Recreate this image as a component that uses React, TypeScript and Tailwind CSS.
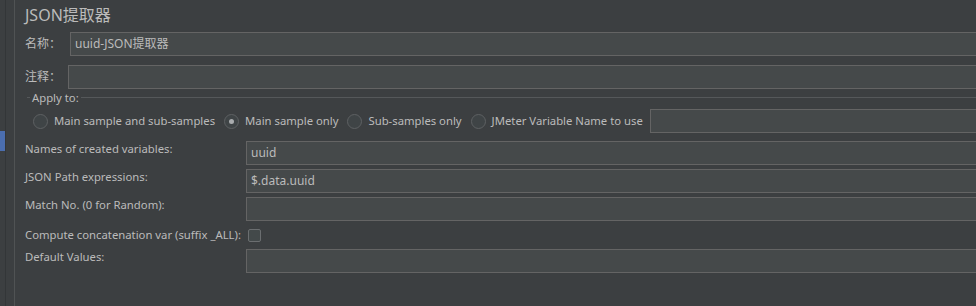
import React from 'react';

const FONT = "font-['Segoe_UI','Noto_Sans','Noto_Sans_CJK_SC',sans-serif]";

const TextBox: React.FC<{ value?: string; className?: string }> = ({ value = '', className = '' }) => (
  <div
    className={`h-[24px] bg-[#45494a] border border-[#646464] border-r-0 flex items-center pl-[4px] text-[12px] text-[#bbbbbb] ${className}`}
  >
    {value}
  </div>
);

const Radio: React.FC<{ label: string; checked?: boolean; className?: string }> = ({ label, checked, className = '' }) => (
  <div className={`flex items-center gap-[6px] ${className}`}>
    <span className="w-[15px] h-[15px] rounded-full border border-[#5e6163] bg-[#3f4446] flex items-center justify-center shrink-0">
      {checked && <span className="w-[5px] h-[5px] rounded-full bg-[#a9acae]" />}
    </span>
    <span className="text-[11.3px] text-[#bbbbbb] whitespace-nowrap">{label}</span>
  </div>
);

const FieldRow: React.FC<{ label: string; value?: string }> = ({ label, value }) => (
  <div className="flex">
    <div className="w-[221px] shrink-0 text-[11.3px] leading-[15px] text-[#bbbbbb]">{label}</div>
    <TextBox value={value} className="flex-1" />
  </div>
);

export default function App() {
  return (
    <div className={`w-[976px] h-[306px] bg-[#3c3f41] flex overflow-hidden ${FONT}`}>
      {/* left gutter */}
      <div className="w-[5px] shrink-0 flex flex-col">
        <div className="h-[131px]" />
        <div className="h-[20px] bg-[#4b6eaf]" />
      </div>
      <div className="w-px shrink-0 bg-[#333638]" />
      <div className="w-[8px] shrink-0" />
      <div className="w-px shrink-0 bg-[#505354]" />

      <div className="flex-1 flex flex-col pl-[10px] mr-[-4px]">
        <div className="h-[32px] flex items-center text-[16px] text-[#bbbbbb] pb-[3px]">JSON提取器</div>

        <div className="flex items-center">
          <div className="w-[45px] shrink-0 text-[12px] text-[#bbbbbb]">名称：</div>
          <TextBox value="uuid-JSON提取器" className="flex-1" />
        </div>

        <div className="flex items-center mt-[9px]">
          <div className="w-[43px] shrink-0 text-[12px] text-[#bbbbbb]">注释：</div>
          <TextBox className="flex-1" />
        </div>

        {/* Apply to */}
        <div className="mt-[1px] ml-[2px] flex items-center h-[15px]">
          <div className="w-[3px] h-px bg-[#55585a]" />
          <span className="px-[2px] text-[11.3px] text-[#bbbbbb] leading-[15px]">Apply to:</span>
          <div className="flex-1 h-px bg-[#55585a]" />
        </div>
        <div className="flex items-center mt-[4px] ml-[8px]">
          <Radio label="Main sample and sub-samples" />
          <Radio label="Main sample only" checked className="ml-[9px]" />
          <Radio label="Sub-samples only" className="ml-[9px]" />
          <Radio label="JMeter Variable Name to use" className="ml-[9px]" />
          <TextBox className="flex-1 ml-[7px]" />
        </div>

        <div className="flex flex-col gap-[4px] mt-[8px]">
          <FieldRow label="Names of created variables:" value="uuid" />
          <FieldRow label="JSON Path expressions:" value="$.data.uuid" />
          <FieldRow label="Match No. (0 for Random):" />
          <div className="flex items-center h-[20px]">
            <span className="text-[11.3px] text-[#bbbbbb] whitespace-nowrap">Compute concatenation var (suffix _ALL):</span>
            <span className="ml-[7px] w-[13px] h-[13px] rounded-[2px] border border-[#6b6e70] bg-[#43494a]" />
          </div>
          <FieldRow label="Default Values:" />
        </div>
      </div>
    </div>
  );
}
